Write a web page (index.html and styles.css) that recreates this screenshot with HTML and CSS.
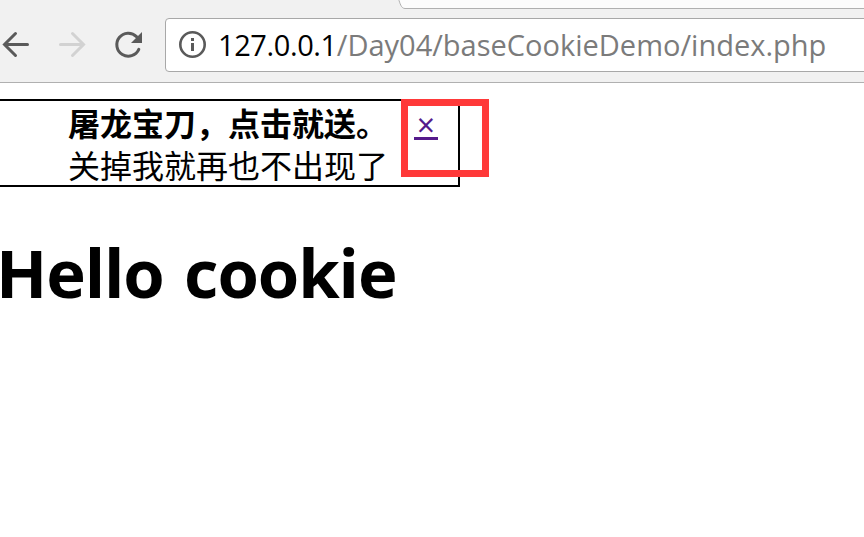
FILE: index.html
```html
<!DOCTYPE html>
<html lang="zh-CN">
<head><meta charset="utf-8"><title>Cookie</title><link rel="stylesheet" href="styles.css"></head>
<body>
<header class="toolbar">
<svg class="tab" width="467" height="10" viewBox="0 0 467 10"><path d="M1.500 -1 C3 3 4 8.500 8 8.500 H468 V-1Z" fill="#fcfcfc" stroke="#b0b0b0"/></svg>
<svg class="nav" width="150" height="36" viewBox="0 0 150 36" fill="none" stroke-width="3" stroke-linecap="round"><path d="M27.500 17.500H5M15.500 6.500L4.500 17.500l11 11" stroke="#5a5a5a"/><path d="M60.500 17.500H83M72.500 6.500l11 11-11 11" stroke="#d2d2d2"/><path d="M136.500 9.600a11.500 11.500 0 1 0 2.300 12.800" stroke="#5a5a5a"/><path d="M142 5v11h-11z" fill="#5a5a5a"/></svg>
<div class="address">
<svg class="info" width="28" height="28" viewBox="0 0 28 28"><circle cx="13.500" cy="13.500" r="12.200" fill="none" stroke="#5a5a5a" stroke-width="2.600"/><path d="M13.500 12v8M13.500 7v3" stroke="#5a5a5a" stroke-width="3"/></svg>
<span class="url"><span class="host">127.0.0.1</span>/Day04/baseCookieDemo/index.php</span>
</div>
</header>
<main>
<section class="ad"><div class="copy"><strong>屠龙宝刀，点击就送。</strong><p>关掉我就再也不出现了</p></div><a class="close" href="#">×</a><span class="mark"></span></section>
<h1>Hello cookie</h1>
</main>
</body>
</html>
```
FILE: styles.css
```css
* { box-sizing: border-box; }
body { margin: 0; width: 864px; height: 537px; overflow: hidden; background: #fff; color: #000; font-family: "Open Sans", "Noto Sans CJK SC", sans-serif; }
.toolbar { position: relative; display: flex; height: 83px; padding-top: 18px; background: #f1f1f1; border-bottom: 1px solid #b0b0b0; }
.tab { position: absolute; left: 397px; top: 0; }
.nav { flex: none; margin: 9px 15px 0 0; }
.address { display: flex; align-items: center; width: 720px; flex: none; height: 54px; padding-left: 13px; background: #fff; border: 1px solid #a8a8a8; border-radius: 4px; }
.info { flex: none; }
.url { margin: -2px 0 0 11px; color: #7b7b7b; font-size: 29px; white-space: nowrap; }
.host { color: #000; letter-spacing: -0.4px; }
.ad { position: relative; display: flex; width: 460px; height: 88px; margin-top: 16px; padding: 2px 0 0 68px; border: 2px solid #000; border-left: 0; }
.copy { width: 346px; font-size: 32px; line-height: 42px; font-weight: 400; white-space: nowrap; }
.copy strong { display: block; font-weight: 700; }
.copy p { margin: 0; }
.close { width: 24px; height: 37px; border-bottom: 3px solid #551a8b; color: #551a8b; font-size: 32px; line-height: 44px; text-align: center; text-decoration: none; }
.mark { position: absolute; left: 401px; top: -2px; width: 88px; height: 78px; border: 7px solid #ff3939; }
h1 { margin: 40px 0 0 -4px; font-size: 67px; line-height: 90px; letter-spacing: -1.1px; word-spacing: 4px; white-space: nowrap; }
```
